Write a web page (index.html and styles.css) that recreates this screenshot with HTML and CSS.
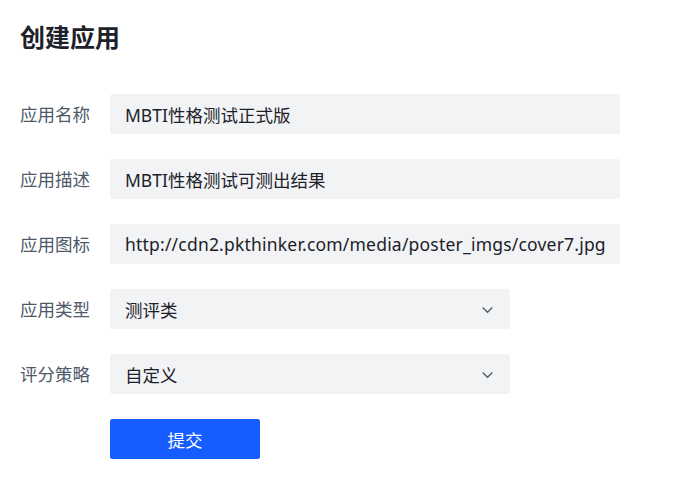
FILE: index.html
```html
<!DOCTYPE html>
<html lang="zh-CN">
<head>
  <meta charset="UTF-8" />
  <meta name="viewport" content="width=device-width, initial-scale=1.0"/>
  <title>创建应用</title>
  <link rel="stylesheet" href="styles.css">
</head>
<body>

  <div class="page">
    <h1 class="title">创建应用</h1>

    <form class="app-form">
      <div class="form-row">
        <label class="form-label">应用名称</label>
        <input class="form-input" type="text" value="MBTI性格测试正式版" />
      </div>

      <div class="form-row">
        <label class="form-label">应用描述</label>
        <input class="form-input" type="text" value="MBTI性格测试可测出结果" />
      </div>

      <div class="form-row">
        <label class="form-label">应用图标</label>
        <input class="form-input url-input" type="text" value="http://cdn2.pkthinker.com/media/poster_imgs/cover7.jpg" />
      </div>

      <div class="form-row">
        <label class="form-label">应用类型</label>
        <div class="form-select">
          <span class="select-value">测评类</span>
          <svg class="select-arrow" viewBox="0 0 48 48" width="15" height="15">
            <path d="M39.6 17.443 24.043 33 8.487 17.443" fill="none" stroke="currentColor" stroke-width="4"/>
          </svg>
        </div>
      </div>

      <div class="form-row">
        <label class="form-label">评分策略</label>
        <div class="form-select">
          <span class="select-value">自定义</span>
          <svg class="select-arrow" viewBox="0 0 48 48" width="15" height="15">
            <path d="M39.6 17.443 24.043 33 8.487 17.443" fill="none" stroke="currentColor" stroke-width="4"/>
          </svg>
        </div>
      </div>

      <div class="form-row">
        <span></span>
        <button class="submit-btn" type="button">提交</button>
      </div>
    </form>
  </div>

</body>
</html>
```

FILE: styles.css
```css
body {
  margin: 0;
  padding: 0;
  background: #fff;
  font-family: "Noto Sans", "Noto Sans CJK SC", sans-serif;
  color: #1d2129;
}
.page {
  padding: 20px;
}
.title {
  margin: 0;
  font-size: 25px;
  line-height: 35px;
  font-weight: 700;
  color: #1d2129;
}
.app-form {
  margin-top: 39px;
}
.form-row {
  display: grid;
  grid-template-columns: 90px auto;
  align-items: center;
  margin-bottom: 25px;
}
.form-label {
  padding-right: 20px;
  text-align: right;
  font-size: 17.5px;
  line-height: 40px;
  color: #4e5969;
}
.form-input {
  box-sizing: border-box;
  width: 510px;
  height: 40px;
  padding: 0 15px;
  border: none;
  border-radius: 2.5px;
  background: #f2f3f5;
  font-family: inherit;
  font-size: 17.5px;
  color: #1d2129;
  outline: none;
}
.url-input {
  letter-spacing: 0.2px;
}
.form-select {
  box-sizing: border-box;
  display: flex;
  align-items: center;
  justify-content: space-between;
  width: 400px;
  height: 40px;
  padding: 0 15px;
  border-radius: 2.5px;
  background: #f2f3f5;
  font-size: 17.5px;
  color: #1d2129;
}
.select-arrow {
  color: #4e5969;
}
.submit-btn {
  width: 150px;
  height: 40px;
  border: none;
  border-radius: 2.5px;
  background: #165dff;
  color: #fff;
  font-family: inherit;
  font-size: 17.5px;
  cursor: pointer;
}
```
